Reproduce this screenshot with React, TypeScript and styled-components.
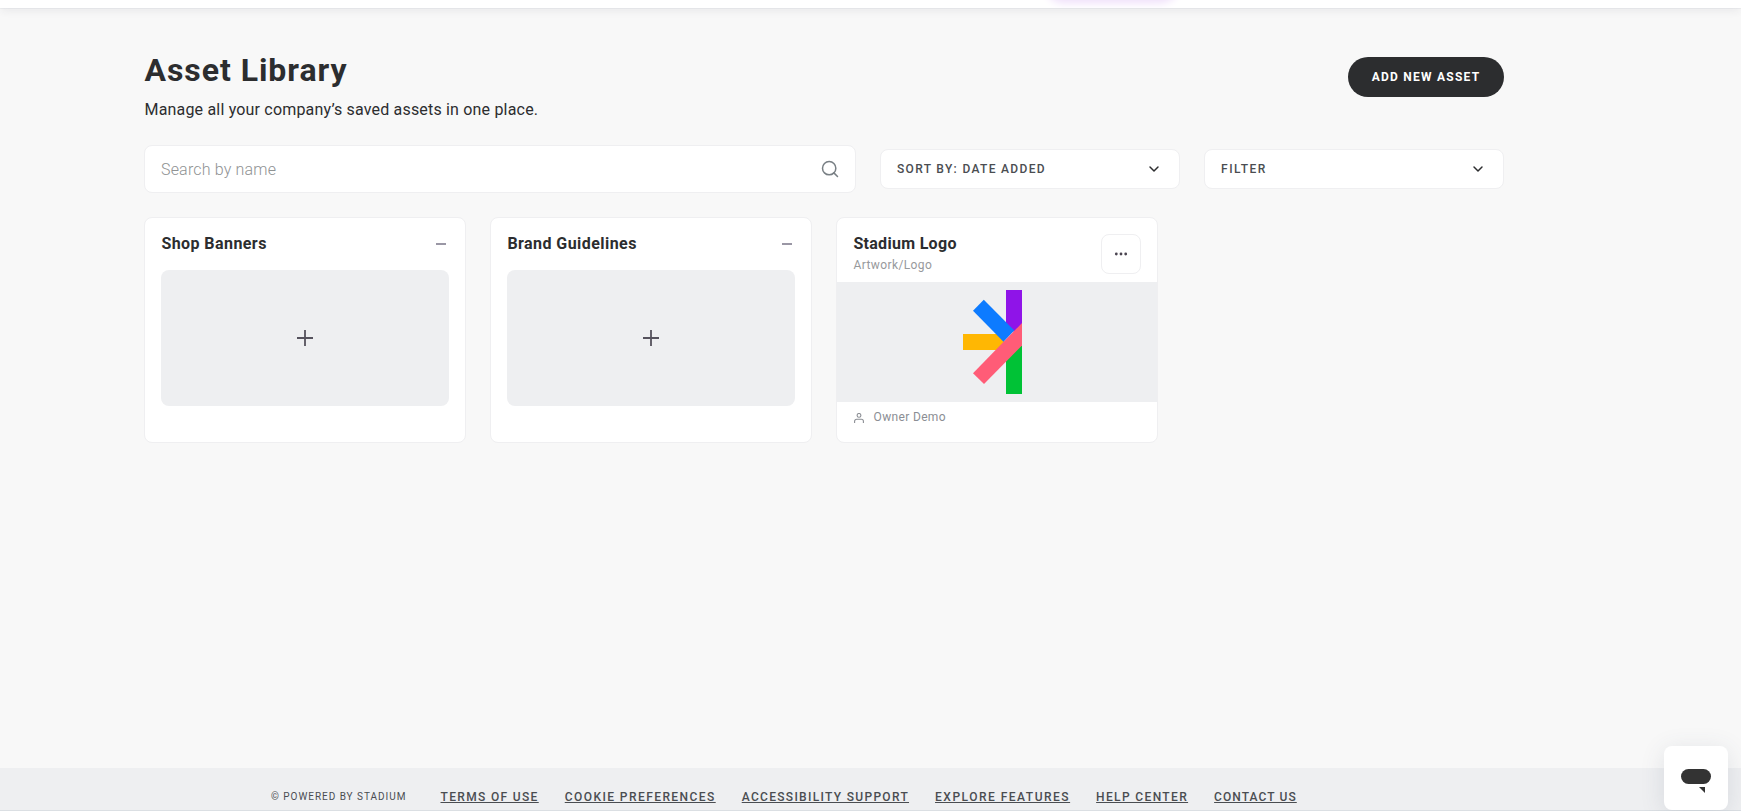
import React from 'react';
import styled, { createGlobalStyle } from 'styled-components';
import { ChevronDown, Search } from 'lucide-react';

const GlobalStyle = createGlobalStyle`
  *, *::before, *::after { box-sizing: border-box; }
  body { margin: 0; background: #f8f8f8; }
  button, input { font-family: inherit; }
`;

const Page = styled.div`
  height: 811px;
  display: flex;
  flex-direction: column;
  overflow: hidden;
  background: #f8f8f8;
  color: #2c2d2f;
  font-family: Roboto, 'Liberation Sans', sans-serif;
`;

const TopBar = styled.header`
  position: relative;
  flex: none;
  height: 8px;
  background: #fff;
  box-shadow: 0 0 1px rgba(12, 26, 75, 0.24), 0 3px 8px -1px rgba(50, 50, 71, 0.1);
`;

const Glow = styled.div`
  position: absolute;
  top: 0;
  left: 1032px;
  width: 160px;
  height: 8px;
  overflow: hidden;

  &::before {
    content: '';
    position: absolute;
    left: 18px;
    top: -30px;
    width: 124px;
    height: 28px;
    border-radius: 14px;
    box-shadow: 0 0 8px 5px #efdffa;
  }
`;

const Main = styled.main`
  flex: 1;
  width: 1360px;
  margin-left: 144px;
  padding-top: 45px;
`;

const Heading = styled.div`
  display: flex;
  justify-content: space-between;
  align-items: flex-start;
  height: 68px;
  margin-bottom: 24px;
`;

const HeadingText = styled.div`
  padding: 1px 0 0 0.5px;
`;

const Title = styled.h1`
  margin: 0 0 12px;
  font-size: 32px;
  line-height: 32px;
  font-weight: 700;
  letter-spacing: 0.95px;
`;

const Subtitle = styled.p`
  margin: 0;
  font-size: 16px;
  line-height: 24px;
  letter-spacing: 0.185px;
`;

const AddButton = styled.button`
  width: 156px;
  height: 40px;
  margin-top: 4px;
  padding: 0;
  border: 0;
  border-radius: 20px;
  background: #2c2d2f;
  color: #fff;
  font-size: 12px;
  font-weight: 700;
  letter-spacing: 1.25px;
`;

const Toolbar = styled.div`
  display: flex;
  align-items: center;
  gap: 24px;
  margin-bottom: 24px;
`;

const SearchBox = styled.label`
  display: flex;
  align-items: center;
  width: 712px;
  height: 48px;
  padding: 0 15px 0 16px;
  border: 1px solid #efeff1;
  border-radius: 8px;
  background: #fff;
  color: #787f84;
`;

const SearchInput = styled.input`
  flex: 1;
  min-width: 0;
  padding: 0;
  border: 0;
  outline: 0;
  background: transparent;
  font-size: 16px;
  font-weight: 300;
  letter-spacing: 0.18px;

  &::placeholder { color: #8f9293; opacity: 1; }
`;

const Select = styled.button<{ $track: number }>`
  display: flex;
  align-items: center;
  justify-content: space-between;
  width: 300px;
  height: 40px;
  padding: 0 17px 0 16px;
  border: 1px solid #efeff1;
  border-radius: 8px;
  background: #fff;
  color: #4a4d51;
  font-size: 12px;
  font-weight: 500;
  letter-spacing: ${(p) => p.$track}px;

  svg { color: #2c2d2f; }
`;

const Grid = styled.div`
  display: grid;
  grid-template-columns: repeat(4, 1fr);
  gap: 24px;
`;

const Card = styled.article`
  display: flex;
  flex-direction: column;
  height: 226px;
  border: 1px solid #efeff1;
  border-radius: 8px;
  background: #fff;
`;

const CardHeader = styled.div<{ $height: number }>`
  display: flex;
  justify-content: space-between;
  align-items: flex-start;
  height: ${(p) => p.$height}px;
  padding: 16px 16px 0;
`;

const CardTitle = styled.h2<{ $track: number }>`
  margin: 0;
  padding-left: 0.4px;
  font-size: 16px;
  line-height: 20px;
  font-weight: 700;
  letter-spacing: ${(p) => p.$track}px;
`;

const Category = styled.div`
  margin-top: 3px;
  padding-left: 0.4px;
  color: #97999c;
  font-size: 12px;
  line-height: 16px;
  letter-spacing: 0.41px;
`;

const Minus = styled.span`
  width: 10px;
  height: 2px;
  margin: 9px 3px 0 0;
  background: #9a97a5;
`;

const Placeholder = styled.button`
  display: flex;
  align-items: center;
  justify-content: center;
  height: 136px;
  margin: 0 16px;
  padding: 0 0 1px;
  border: 0;
  border-radius: 8px;
  background: #eeeff1;
`;

const MenuButton = styled.button`
  display: flex;
  align-items: center;
  justify-content: center;
  width: 40px;
  height: 40px;
  padding: 0;
  border: 1px solid #efeff1;
  border-radius: 8px;
  background: #fff;
`;

const Preview = styled.div`
  display: flex;
  align-items: center;
  justify-content: center;
  height: 120px;
  padding-right: 9px;
  background: #eeeff1;
`;

const Owner = styled.div`
  display: flex;
  align-items: center;
  gap: 9.6px;
  padding: 7px 17px 0;
  color: #8b8e94;
  font-size: 12px;
  line-height: 16px;
  letter-spacing: 0.34px;

  svg { margin-top: 1px; }
`;

const Footer = styled.footer`
  display: flex;
  align-items: center;
  flex: none;
  height: 43px;
  padding: 15px 0 0 271px;
  border-bottom: 1px solid #dbdfe3;
  background: #eeeff1;
`;

const Powered = styled.span`
  width: 169.5px;
  color: #4a4d51;
  font-size: 10px;
  line-height: 14px;
  letter-spacing: 0.97px;
`;

const Links = styled.nav`
  display: flex;
  gap: 26px;
`;

const FooterLink = styled.a<{ $track: number }>`
  color: #4a4d51;
  font-size: 12px;
  line-height: 16px;
  font-weight: 500;
  letter-spacing: ${(p) => p.$track}px;
  white-space: nowrap;
  text-decoration: underline;
  text-decoration-thickness: 1px;
  text-decoration-skip-ink: none;
`;

const ChatButton = styled.button`
  position: absolute;
  left: 1664px;
  top: 746px;
  display: flex;
  align-items: center;
  justify-content: center;
  width: 64px;
  height: 64px;
  padding: 6px 0 0;
  border: 0;
  border-radius: 8px;
  background: #fff;
  box-shadow: 0 4px 24px rgba(60, 80, 100, 0.13);
`;

const PlusIcon = () => (
  <svg width="16" height="16" viewBox="0 0 16 16" fill="none" stroke="#55525d" strokeWidth="1.8">
    <path d="M0 8h16M8 0v16" />
  </svg>
);

const DotsIcon = () => (
  <svg width="14" height="4" viewBox="0 0 14 4" fill="#4a4450">
    <circle cx="2.3" cy="2" r="1.4" />
    <circle cx="7" cy="2" r="1.4" />
    <circle cx="11.7" cy="2" r="1.4" />
  </svg>
);

const UserIcon = () => (
  <svg width="10" height="10" viewBox="0 0 10 10" fill="none" stroke="currentColor" strokeWidth="1.1">
    <circle cx="5" cy="2.4" r="1.9" />
    <path d="M.6 10V8.3a2 2 0 0 1 2-2h4.8a2 2 0 0 1 2 2V10" />
  </svg>
);

const StadiumMark = () => (
  <svg width="59" height="104" viewBox="0 0 59 104">
    <path fill="#8f14e8" d="M43 0h16v34l-8 8-8-8z" />
    <path fill="#00c236" d="M43 70l16-16v50H43z" />
    <path fill="#ffb703" d="M0 44h34l8 8-8 8H0z" />
    <path fill="#0d7bff" d="M20.8 9.7 51.3 40.5 40.5 51.7 10 20.8z" />
    <path fill="#ff5c77" d="M59 33v22.5L21 94 10 83.2z" />
  </svg>
);

const ChatIcon = () => (
  <svg width="30" height="24" viewBox="0 0 30 24" fill="#333">
    <rect width="30" height="15" rx="7.5" />
    <path d="M18 18h6v6z" />
  </svg>
);

const emptyFolders = [
  { name: 'Shop Banners', track: 0.43 },
  { name: 'Brand Guidelines', track: 0.44 },
];

const footerLinks = [
  { label: 'TERMS OF USE', track: 1.34 },
  { label: 'COOKIE PREFERENCES', track: 1.43 },
  { label: 'ACCESSIBILITY SUPPORT', track: 1.31 },
  { label: 'EXPLORE FEATURES', track: 1.5 },
  { label: 'HELP CENTER', track: 1.36 },
  { label: 'CONTACT US', track: 1.08 },
];

export default function App() {
  return (
    <Page>
      <GlobalStyle />
      <TopBar>
        <Glow />
      </TopBar>
      <Main>
        <Heading>
          <HeadingText>
            <Title>Asset Library</Title>
            <Subtitle>Manage all your company’s saved assets in one place.</Subtitle>
          </HeadingText>
          <AddButton>ADD NEW ASSET</AddButton>
        </Heading>
        <Toolbar>
          <SearchBox>
            <SearchInput placeholder="Search by name" />
            <Search size={20} strokeWidth={1.8} />
          </SearchBox>
          <Select $track={1.33}>
            SORT BY: DATE ADDED
            <ChevronDown size={16} strokeWidth={2.2} />
          </Select>
          <Select $track={1.55}>
            FILTER
            <ChevronDown size={16} strokeWidth={2.2} />
          </Select>
        </Toolbar>
        <Grid>
          {emptyFolders.map((folder) => (
            <Card key={folder.name}>
              <CardHeader $height={52}>
                <CardTitle $track={folder.track}>{folder.name}</CardTitle>
                <Minus />
              </CardHeader>
              <Placeholder aria-label="Add">
                <PlusIcon />
              </Placeholder>
            </Card>
          ))}
          <Card>
            <CardHeader $height={64}>
              <div>
                <CardTitle $track={0.3}>Stadium Logo</CardTitle>
                <Category>Artwork/Logo</Category>
              </div>
              <MenuButton aria-label="More">
                <DotsIcon />
              </MenuButton>
            </CardHeader>
            <Preview>
              <StadiumMark />
            </Preview>
            <Owner>
              <UserIcon />
              Owner Demo
            </Owner>
          </Card>
        </Grid>
      </Main>
      <Footer>
        <Powered>© POWERED BY STADIUM</Powered>
        <Links>
          {footerLinks.map((link) => (
            <FooterLink key={link.label} $track={link.track}>
              {link.label}
            </FooterLink>
          ))}
        </Links>
      </Footer>
      <ChatButton aria-label="Chat">
        <ChatIcon />
      </ChatButton>
    </Page>
  );
}
